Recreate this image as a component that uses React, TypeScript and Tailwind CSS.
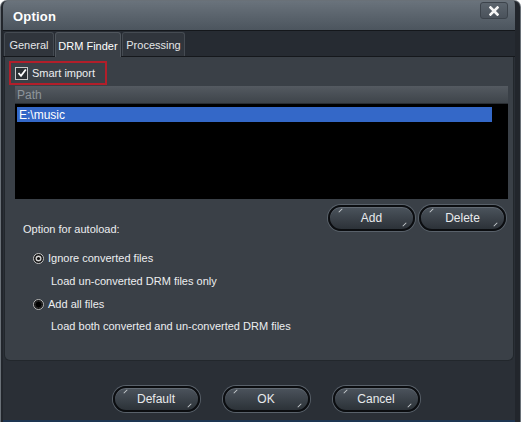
const font = { fontFamily: '"Liberation Sans", Arial, sans-serif' }

type BtnProps = { label: string }
const PillButton = ({ label }: BtnProps) => {
  return (
    <button className="relative w-[87px] h-[26px] rounded-full border-2 border-[#0b0d10] bg-gradient-to-b from-[#4c545d] to-[#2c3238] text-[12px] text-[#e8eaec] shadow-[0_0_0_1px_#59616a,inset_0_1px_0_#626a73] flex items-center justify-center">
      <span className="absolute left-[8px] top-[3px] w-[5px] h-[1px] bg-[#c8ccd0] -rotate-45" />
      <span className="absolute right-[6px] bottom-[4px] w-[5px] h-[1px] bg-[#c8ccd0] -rotate-45" />
      {label}
    </button>
  )
}

const Radio = ({ checked }: { checked: boolean }) => {
  return checked ? (
    <svg width="11" height="11" viewBox="0 0 11 11" className="shrink-0">
      <circle cx="5.5" cy="5.5" r="5" fill="#111" stroke="#c8c8c8" strokeWidth="1" />
      <circle cx="5.5" cy="5.5" r="3" fill="#d8d8d8" />
      <circle cx="5.5" cy="5.5" r="1.6" fill="#111" />
    </svg>
  ) : (
    <svg width="11" height="11" viewBox="0 0 11 11" className="shrink-0">
      <circle cx="5.5" cy="5.5" r="5" fill="#0a0a0a" stroke="#b8b8b8" strokeWidth="1" />
      <circle cx="5.5" cy="5.5" r="3.4" fill="#000" stroke="#444" strokeWidth="0.6" />
    </svg>
  )
}

const App = () => {
  return (
    <div style={font} className="w-[521px] h-[422px] bg-[#6a7178] pt-px pl-px pr-[1px] rounded-t-[7px] overflow-hidden">
      <div className="h-full flex flex-col bg-[#2a2f36] rounded-t-[6px] overflow-hidden border-l-2 border-[#22262c] border-r-[5px]">
        {/* title bar */}
        <div className="h-[30px] shrink-0 flex items-center justify-between pl-[10px] pr-[7px] pt-[2px] bg-gradient-to-b from-[#6a737c] to-[#4c555e] border-b border-[#14171b]">
          <span className="text-[13px] font-bold text-white tracking-[0.2px]">Option</span>
          <div className="w-[28px] h-[17px] -mt-[12px] rounded-[3px] border border-[#3c434b] bg-gradient-to-b from-[#5c656e] to-[#4a525b] flex items-center justify-center">
            <svg width="10" height="10" viewBox="0 0 10 10">
              <path d="M1.5 1.5 L8.5 8.5 M8.5 1.5 L1.5 8.5" stroke="#f4f4f4" strokeWidth="2.6" strokeLinecap="square" />
            </svg>
          </div>
        </div>

        {/* tabs */}
        <div className="h-[26px] shrink-0 flex items-end pl-px gap-px bg-[#262b32] border-b border-[#15181c]">
          <div className="h-[24px] w-[50px] pt-[2px] flex items-center justify-center rounded-t-[3px] bg-[#30353c] border border-b-0 border-[#454b52] text-[11px] text-[#e4e6e8]">
            General
          </div>
          <div className="h-[25px] w-[66px] -mb-px pt-[2px] flex items-center justify-center rounded-t-[3px] bg-[#3a4047] border border-b-0 border-[#50565d] text-[11px] text-white">
            DRM Finder
          </div>
          <div className="h-[24px] w-[63px] pt-[2px] flex items-center justify-center rounded-t-[3px] bg-[#30353c] border border-b-0 border-[#454b52] text-[11px] text-[#e4e6e8]">
            Processing
          </div>
        </div>

        {/* panel */}
        <div className="h-[304px] shrink-0 mx-px bg-[#3a4047] rounded-b-[6px] border border-t-0 border-[#22272c] flex flex-col pt-[4px] pl-[4px] pr-[5px] text-[11px] text-[#eceef0]">
          <div className="w-[98px] h-[24px] border-2 border-[#b21e2a] flex items-center gap-[4px] pl-[4px]">
            <span className="w-[13px] h-[13px] border border-[#c9c9c9] bg-[#2b2f33] flex items-center justify-center">
              <svg width="10" height="10" viewBox="0 0 10 10">
                <path d="M1.5 5 L4 7.8 L8.8 1.5" fill="none" stroke="#ffffff" strokeWidth="1.8" />
              </svg>
            </span>
            <span>Smart import</span>
          </div>

          <div className="ml-[6px] mt-px">
            <div className="h-[18px] flex items-center pl-[2px] bg-gradient-to-b from-[#545a61] to-[#3e444a] text-[#8e959c] text-[12px] border-b border-[#2a2e33]">
              Path
            </div>
            <div className="h-[95px] bg-black pt-[3px] pl-[2px] pr-[16px]">
              <div className="h-[15px] bg-[#3468c8] flex items-center pl-[2px] text-white text-[12px]">E:\music</div>
            </div>
          </div>

          <div className="flex justify-end gap-[4px] mt-[6px] pr-[2px]">
            <PillButton label="Add" />
            <PillButton label="Delete" />
          </div>

          <div className="-mt-[9px] ml-[14px] leading-[14px]">Option for autoload:</div>

          <div className="ml-[24px] mt-[15px] flex items-center gap-[4px] leading-[14px]">
            <Radio checked={true} />
            <span>Ignore converted files</span>
          </div>
          <div className="ml-[42px] mt-[9px] leading-[14px]">Load un-converted DRM files only</div>

          <div className="ml-[24px] mt-[9px] flex items-center gap-[4px] leading-[14px]">
            <Radio checked={false} />
            <span>Add all files</span>
          </div>
          <div className="ml-[42px] mt-[8px] leading-[14px]">Load both converted and un-converted DRM files</div>
        </div>

        {/* bottom */}
        <div className="flex-1 flex justify-center items-start pt-[25px] pl-[14px] gap-[23px] border-b-2 border-[#1d3552]">
          <PillButton label="Default" />
          <PillButton label="OK" />
          <PillButton label="Cancel" />
        </div>
      </div>
    </div>
  )
}

export default App
